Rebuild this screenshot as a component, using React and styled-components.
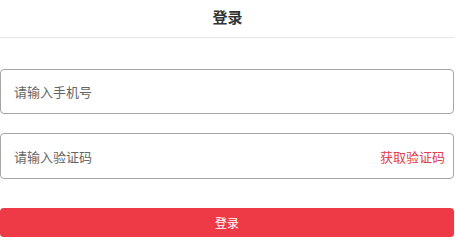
import React from "react";
import styled, { createGlobalStyle } from "styled-components";

const Global = createGlobalStyle`
  html, body { margin: 0; padding: 0; background: #fff; }
  body { font-family: "Noto Sans CJK SC", "Noto Sans", sans-serif; }
  * { box-sizing: border-box; }
`;

const Page = styled.div`
  display: flex;
  flex-direction: column;
  width: 455px;
`;

const Header = styled.header`
  height: 38px;
  display: flex;
  align-items: center;
  justify-content: center;
  border-bottom: 1px solid #e6e6e6;
  padding-bottom: 4px;
`;

const Title = styled.h1`
  margin: 0;
  font-size: 15px;
  font-weight: 700;
  color: #333;
`;

const Form = styled.form`
  display: flex;
  flex-direction: column;
  padding: 31px 1px 0 0;
`;

const Field = styled.div`
  display: flex;
  align-items: center;
  height: ${(p) => p.$h}px;
  margin-bottom: ${(p) => p.$mb}px;
  border: 1px solid #a6a6a6;
  border-radius: 4px;
  padding: 0 8px 0 13px;
`;

const Input = styled.input`
  flex: 1;
  border: none;
  outline: none;
  background: transparent;
  font-family: inherit;
  font-size: 13px;
  color: #333;
  padding: 0;
  &::placeholder { color: #666; }
`;

const CodeLink = styled.span`
  font-size: 13px;
  color: #e0404b;
`;

const Submit = styled.button`
  height: 29px;
  border: none;
  border-radius: 4px;
  background: #ee3a47;
  color: #fff;
  font-family: inherit;
  font-size: 12px;
  box-shadow: 0 1px 2px rgba(0, 0, 0, 0.2);
  padding: 0;
`;

export default function App() {
  return (
    <Page>
      <Global />
      <Header>
        <Title>登录</Title>
      </Header>
      <Form onSubmit={(e) => e.preventDefault()}>
        <Field $h={45} $mb={19}>
          <Input placeholder="请输入手机号" />
        </Field>
        <Field $h={46} $mb={29}>
          <Input placeholder="请输入验证码" />
          <CodeLink>获取验证码</CodeLink>
        </Field>
        <Submit type="submit">登录</Submit>
      </Form>
    </Page>
  );
}
